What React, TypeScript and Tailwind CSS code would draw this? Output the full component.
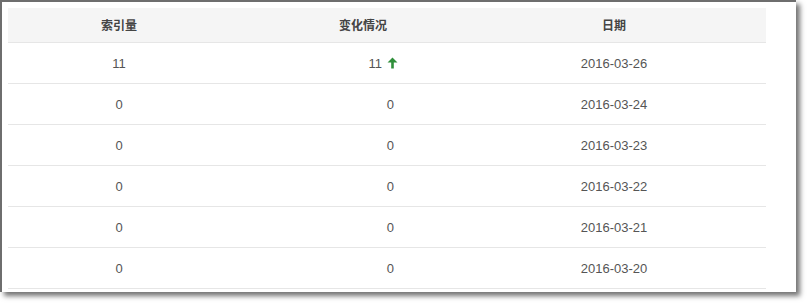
const rows = [
    { count: "11", change: "11", up: true, date: "2016-03-26" },
    { count: "0", change: "0", up: false, date: "2016-03-24" },
    { count: "0", change: "0", up: false, date: "2016-03-23" },
    { count: "0", change: "0", up: false, date: "2016-03-22" },
    { count: "0", change: "0", up: false, date: "2016-03-21" },
    { count: "0", change: "0", up: false, date: "2016-03-20" },
];

const UpArrow = () => (
    <svg width="11" height="12" viewBox="0 0 11 12" className="ml-[5px] mb-[2px]">
        <path d="M5.5 0.5 L10.5 5.5 L6.8 5.5 L6.8 11.5 L4.2 11.5 L4.2 5.5 L0.5 5.5 Z" fill="#2f8f3a" />
    </svg>
);

const App = () => {
    return (
        <div
            className="w-[807px] h-[305px] bg-white"
            style={{ fontFamily: '"Liberation Sans", "Noto Sans CJK SC", sans-serif' }}
        >
            <div className="w-[796px] h-[292px] bg-white border-t-2 border-l-2 border-[#6e6e6e] shadow-[4px_4px_5px_rgba(0,0,0,0.55)] pt-[6px] pl-[6px]">
                <div className="w-[758px]">
                    <div className="grid grid-cols-[222px_266px_236px_1fr] h-[35px] pt-[2px] bg-[#f5f5f5] border-b border-[#e6e6e6] text-[12px] font-bold text-[#444]">
                        <div className="flex items-center justify-center">索引量</div>
                        <div className="flex items-center justify-center">变化情况</div>
                        <div className="flex items-center justify-center">日期</div>
                        <div />
                    </div>
                    {rows.map((row) => (
                        <div
                            key={row.date}
                            className="grid grid-cols-[222px_266px_236px_1fr] h-[41px] pt-[2px] border-b border-[#e6e6e6] text-[13px] text-[#555]"
                        >
                            <div className="flex items-center justify-center">{row.count}</div>
                            {row.up ? (
                                <div className="flex items-center justify-end pr-[98px]">
                                    {row.change}
                                    <UpArrow />
                                </div>
                            ) : (
                                <div className="flex items-center justify-end pr-[102px]">
                                    {row.change}
                                </div>
                            )}
                            <div className="flex items-center justify-center">{row.date}</div>
                            <div />
                        </div>
                    ))}
                </div>
            </div>
        </div>
    );
};

export default App;
